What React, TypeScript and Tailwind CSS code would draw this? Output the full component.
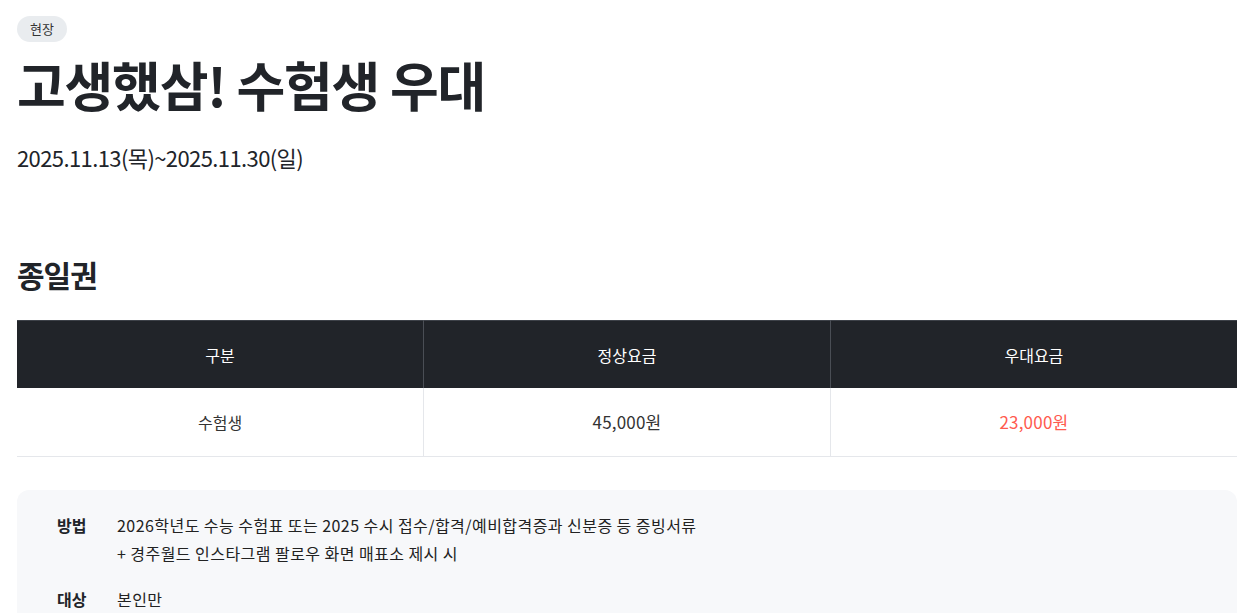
const FONT = '"Noto Sans CJK KR", "Noto Sans", sans-serif'

const rows = [
  { label: '방법', lines: ['2026학년도 수능 수험표 또는 2025 수시 접수/합격/예비합격증과 신분증 등 증빙서류', '+ 경주월드 인스타그램 팔로우 화면 매표소 제시 시'] },
  { label: '대상', lines: ['본인만'] }
]

export default function App() {
  return (
    <div className="min-h-screen w-full bg-white text-[#212429]" style={{ fontFamily: FONT }}>
      <div className="pl-[17px] pr-[22px] pt-[15px]">
        <span className="inline-flex h-[26px] items-center rounded-full bg-[#e9ecef] px-[13px] text-[13px] text-[#333]">
          현장
        </span>
        <h1 className="mt-[10px] text-[53px] font-bold leading-[64px] tracking-[-1.2px]">고생했삼! 수험생 우대</h1>
        <p className="mt-[25px] text-[22px] leading-[32px] tracking-[-0.6px]">2025.11.13(목)~2025.11.30(일)</p>

        <h2 className="mt-[81px] text-[30px] font-bold leading-[40px] tracking-[-1px]">종일권</h2>

        <table className="mt-[26px] w-full table-fixed border-collapse text-[16px]">
          <thead>
            <tr className="h-[68px] border-t border-[#3d4148] bg-[#212429] text-white">
              <th className="border-r border-[#4a4e55] font-normal">구분</th>
              <th className="border-r border-[#4a4e55] font-normal">정상요금</th>
              <th className="font-normal">우대요금</th>
            </tr>
          </thead>
          <tbody>
            <tr className="h-[68px] border-b border-[#e5e7eb] text-center text-[#333]">
              <td className="border-r border-[#e5e7eb]">수험생</td>
              <td className="border-r border-[#e5e7eb] text-[17px] tracking-[0.2px]">45,000원</td>
              <td className="text-[17px] tracking-[0.2px] text-[#ff5a4e]">23,000원</td>
            </tr>
          </tbody>
        </table>

        <div className="mt-[33px] flex flex-col gap-[18px] rounded-[12px] bg-[#f7f8fa] pb-[30px] pl-[40px] pt-[21px]">
          {rows.map(row => (
            <div key={row.label} className="flex text-[16px] leading-[28px]">
              <span className="w-[60px] shrink-0 font-bold">{row.label}</span>
              <div className="tracking-[0.45px] text-[#222]">
                {row.lines.map(line => (
                  <p key={line}>{line}</p>
                ))}
              </div>
            </div>
          ))}
        </div>
      </div>
    </div>
  )
}
